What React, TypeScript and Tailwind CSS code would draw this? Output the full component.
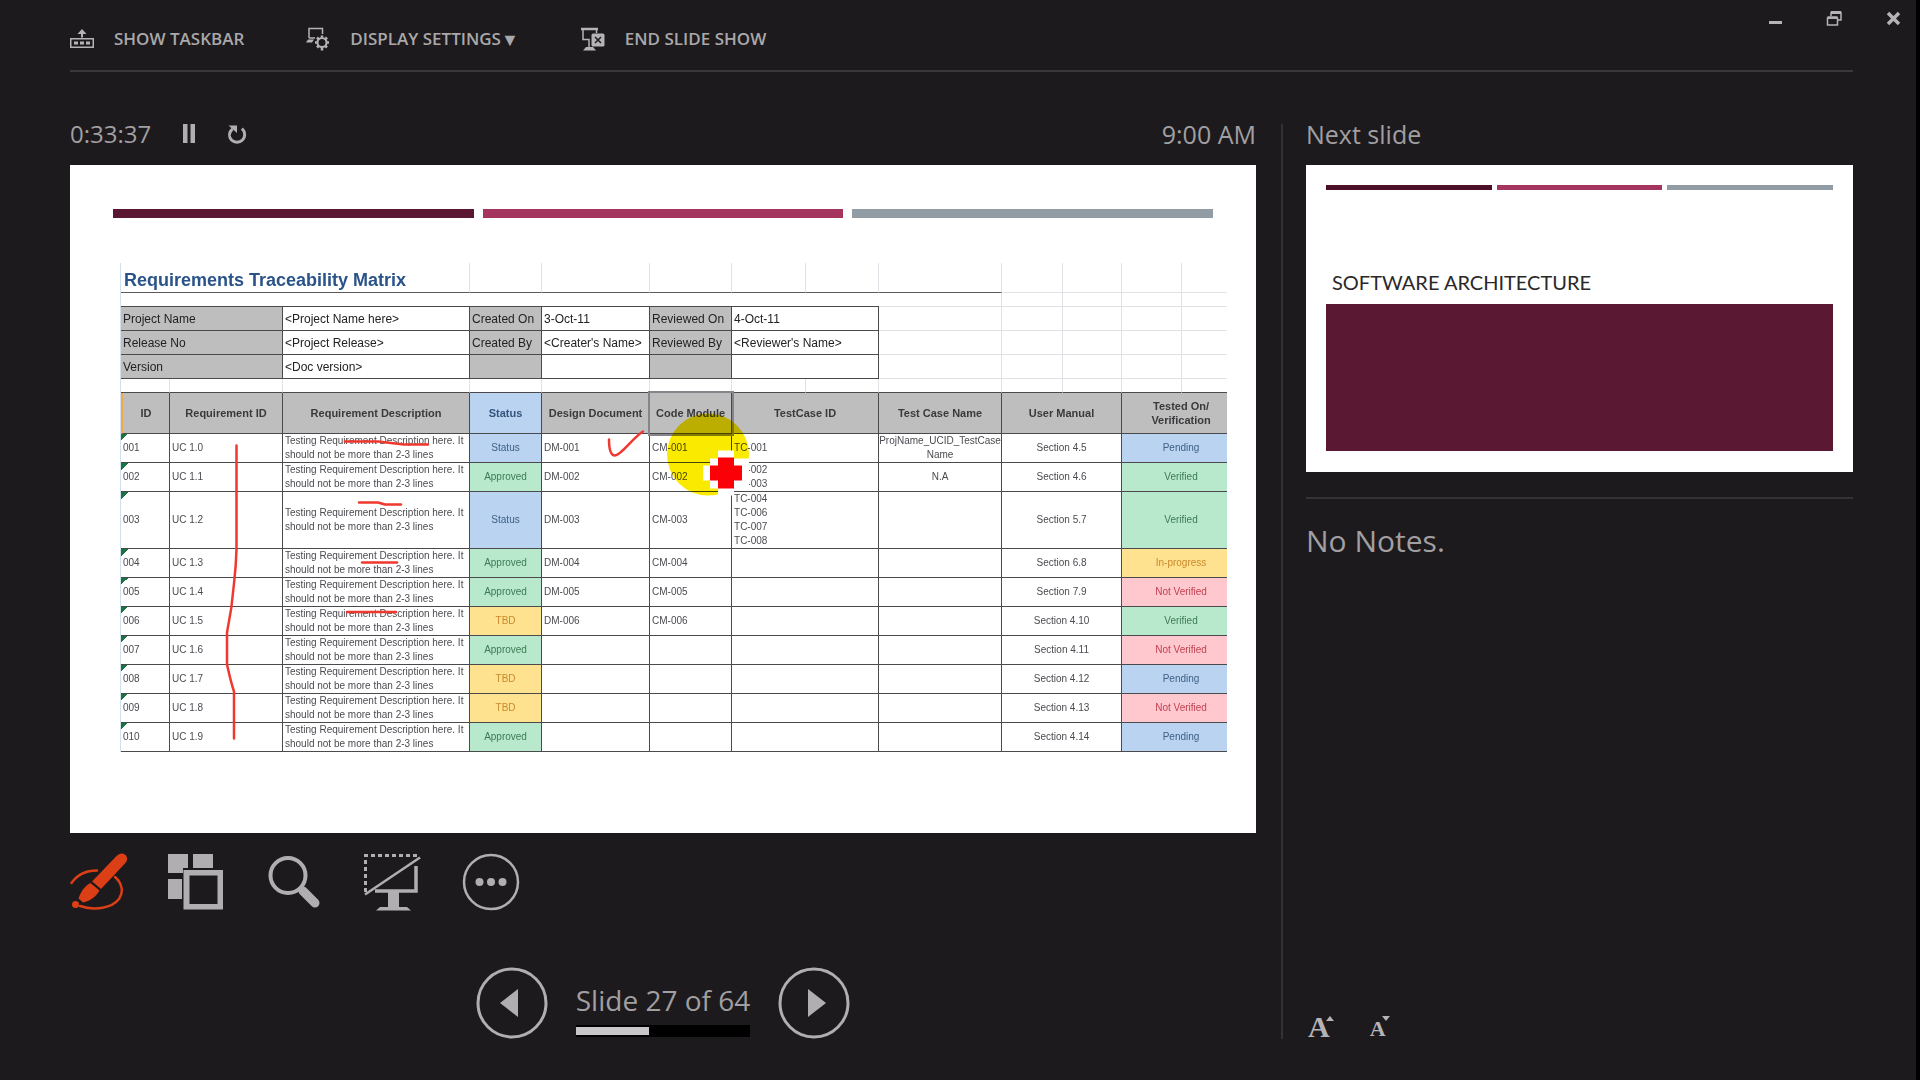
import React from "react";

const TONES: Record<string, string> = {
  Status: "bg-[#b9d3f0] text-[#3f5f86]",
  Pending: "bg-[#b9d3f0] text-[#3f5f86]",
  Approved: "bg-[#b9e9cd] text-[#3d7a55]",
  Verified: "bg-[#b9e9cd] text-[#3d7a55]",
  TBD: "bg-[#ffe28f] text-[#c98a2c]",
  "In-progress": "bg-[#ffe28f] text-[#c98a2c]",
  "Not Verified": "bg-[#ffc7ce] text-[#c24350]",
};

type Row = {
  id: string;
  req: string;
  status: string;
  dm?: string;
  cm?: string;
  tc?: string[];
  name?: string;
  manual: string;
  verification: string;
};

const ROWS: Row[] = [
  { id: "001", req: "UC 1.0", status: "Status", dm: "DM-001", cm: "CM-001", tc: ["TC-001"], name: "ProjName_UCID_TestCase Name", manual: "Section 4.5", verification: "Pending" },
  { id: "002", req: "UC 1.1", status: "Approved", dm: "DM-002", cm: "CM-002", tc: ["TC-002", "TC-003"], name: "N.A", manual: "Section 4.6", verification: "Verified" },
  { id: "003", req: "UC 1.2", status: "Status", dm: "DM-003", cm: "CM-003", tc: ["TC-004", "TC-006", "TC-007", "TC-008"], manual: "Section 5.7", verification: "Verified" },
  { id: "004", req: "UC 1.3", status: "Approved", dm: "DM-004", cm: "CM-004", manual: "Section 6.8", verification: "In-progress" },
  { id: "005", req: "UC 1.4", status: "Approved", dm: "DM-005", cm: "CM-005", manual: "Section 7.9", verification: "Not Verified" },
  { id: "006", req: "UC 1.5", status: "TBD", dm: "DM-006", cm: "CM-006", manual: "Section 4.10", verification: "Verified" },
  { id: "007", req: "UC 1.6", status: "Approved", manual: "Section 4.11", verification: "Not Verified" },
  { id: "008", req: "UC 1.7", status: "TBD", manual: "Section 4.12", verification: "Pending" },
  { id: "009", req: "UC 1.8", status: "TBD", manual: "Section 4.13", verification: "Not Verified" },
  { id: "010", req: "UC 1.9", status: "Approved", manual: "Section 4.14", verification: "Pending" },
];

const INFO = [
  ["Project Name", "<Project Name here>", "Created On", "3-Oct-11", "Reviewed On", "4-Oct-11"],
  ["Release No", "<Project Release>", "Created By", "<Creater's Name>", "Reviewed By", "<Reviewer's Name>"],
  ["Version", "<Doc version>", "", "", "", ""],
];

const DARK = "border-r border-b border-[#4a4a4c]";
const FAINT = "border-r border-b border-[#e4e0e8]";

function FaintTail() {
  return (
    <>
      <td className={FAINT} />
      <td className={FAINT} />
      <td className={FAINT} />
      <td className={FAINT} />
      <td className="border-b border-[#e4e0e8]" />
    </>
  );
}

function Matrix() {
  const data = `${DARK} px-[2px]`;
  const head = `${DARK} bg-[#bfbebf] text-[11px] leading-[14px] font-bold text-[#3a3a3c]`;
  return (
    <table className="w-full table-fixed border-separate border-spacing-0 border-l border-[#cfe0ee] text-[10px] leading-[14px] text-[#4c4a50]">
      <colgroup>
        <col className="w-[49px]" />
        <col className="w-[113px]" />
        <col className="w-[187px]" />
        <col className="w-[72px]" />
        <col className="w-[108px]" />
        <col className="w-[82px]" />
        <col className="w-[74px]" />
        <col className="w-[73px]" />
        <col className="w-[123px]" />
        <col className="w-[61px]" />
        <col className="w-[59px]" />
        <col className="w-[60px]" />
        <col className="w-[45px]" />
      </colgroup>
      <tbody>
        <tr className="h-[30px]">
          <td colSpan={3} className="border-r border-b border-r-[#e4e0e8] border-b-[#5a5a5c] pb-px pl-[3px] align-bottom">
            <h1 className="text-[18px] leading-[22px] font-bold whitespace-nowrap text-[#2a5489]">Requirements Traceability Matrix</h1>
          </td>
          {[0, 1, 2, 3, 4, 5].map((i) => (
            <td key={i} className="border-r border-b border-r-[#e4e0e8] border-b-[#5a5a5c]" />
          ))}
          <td className={FAINT} />
          <td className={FAINT} />
          <td className={FAINT} />
          <td className="border-b border-[#e4e0e8]" />
        </tr>
        <tr className="h-[14px]">
          <td colSpan={8} className="border-b border-[#4a4a4c]" />
          <FaintTail />
        </tr>
        {INFO.map((r) => (
          <tr key={r[0]} className="h-[24px] text-[12px] text-[#222224]">
            <th scope="row" colSpan={2} className={`${data} bg-[#bfbebf] text-left font-normal`}>{r[0]}</th>
            <td className={data}>{r[1]}</td>
            <td className={`${data} bg-[#bfbebf] whitespace-nowrap`}>{r[2]}</td>
            <td className={`${data} whitespace-nowrap`}>{r[3]}</td>
            <td className={`${data} bg-[#bfbebf] whitespace-nowrap`}>{r[4]}</td>
            <td colSpan={2} className={data}>{r[5]}</td>
            <FaintTail />
          </tr>
        ))}
        <tr className="h-[14px]">
          {[0, 1, 2, 3, 4, 5, 6, 7, 8, 9, 10, 11].map((i) => (
            <td key={i} className="border-r border-b border-r-[#e4e0e8] border-b-[#4a4a4c]" />
          ))}
          <td className="border-b border-[#4a4a4c]" />
        </tr>
        <tr className="h-[41px]">
          <th scope="col" className={`${head} border-l-2 border-l-[#f2a94a]`}>ID</th>
          <th scope="col" className={head}>Requirement ID</th>
          <th scope="col" className={head}>Requirement Description</th>
          <th scope="col" className={`${DARK} bg-[#b9d3f0] text-[11px] font-bold text-[#35557f]`}>Status</th>
          <th scope="col" className={`${head} whitespace-nowrap`}>Design Document</th>
          <th scope="col" className={`${head} whitespace-nowrap outline-2 outline-[#85848a]`}>Code Module</th>
          <th scope="col" colSpan={2} className={head}>TestCase ID</th>
          <th scope="col" className={head}>Test Case Name</th>
          <th scope="col" colSpan={2} className={head}>User Manual</th>
          <th scope="col" colSpan={2} className="border-b border-[#4a4a4c] bg-[#bfbebf] pl-[13px] text-[11px] font-bold text-[#3a3a3c]">
            Tested On/
            <br />
            Verification
          </th>
        </tr>
        {ROWS.map((r) => (
          <tr key={r.id} className="h-[29px]">
            <td className={`${data} bg-[linear-gradient(135deg,#1c7340_50%,transparent_50%)] bg-[length:7px_7px] bg-no-repeat`}>{r.id}</td>
            <td className={data}>{r.req}</td>
            <td className={`${data} whitespace-nowrap`}>
              Testing Requirement Description here. It
              <br />
              should not be more than 2-3 lines
            </td>
            <td className={`${DARK} text-center ${TONES[r.status]}`}>{r.status}</td>
            <td className={data}>{r.dm}</td>
            <td className={data}>{r.cm}</td>
            <td colSpan={2} className={data}>
              {r.tc?.map((t) => (
                <div key={t}>{t}</div>
              ))}
            </td>
            <td className={`${DARK} text-center`}>{r.name}</td>
            <td colSpan={2} className={`${DARK} text-center`}>{r.manual}</td>
            <td colSpan={2} className={`border-b border-[#4a4a4c] pl-[13px] text-center ${TONES[r.verification]}`}>{r.verification}</td>
          </tr>
        ))}
      </tbody>
    </table>
  );
}

function Ink() {
  return (
    <>
      <svg viewBox="70 165 1186 667" className="pointer-events-none absolute inset-0 h-full w-full mix-blend-multiply" aria-hidden="true">
        <circle cx="708" cy="454" r="41" fill="#faea00" />
      </svg>
      <svg viewBox="70 165 1186 667" className="pointer-events-none absolute inset-0 h-full w-full" aria-hidden="true">
        <g fill="none" stroke="#f0382f" strokeWidth="2.500" strokeLinecap="round" strokeLinejoin="round">
          <path d="M609 439C609 446 610 455 615 455C621 455 632 438 643 431" />
          <path d="M236.500 445V549Q236 566 234 583Q232 608 227 632V664Q231 682 234 691V738" />
          <path d="M345 441H378L404 444H428" />
          <path d="M359 502H378L385 504H401" />
          <path d="M362 562H397" />
          <path d="M347 611.500H396" />
        </g>
        <path d="M718 450H734V458H749V488H734V495H718V488H710V480H703V465H710V458H718Z" fill="#fff" />
        <path d="M718 457H734V465H742V480H734V488H718V480H710V465H718Z" fill="#fb0007" />
      </svg>
    </>
  );
}

function TaskbarIcon() {
  return (
    <svg width="24" height="24" viewBox="0 0 24 24" fill="#b5b3b5" aria-hidden="true">
      <path d="M12 2l4.500 5H13v3.500h-2V7H7.500z" />
      <path d="M0 11h24v10H0zM1.500 12.500v7h21v-7z" fillRule="evenodd" />
      <path d="M4 14.500h4v3H4zM10 14.500h4v3h-4zM16 14.500h4v3h-4z" />
    </svg>
  );
}

function DisplayIcon() {
  return (
    <svg width="24" height="24" viewBox="0 0 24 24" fill="none" stroke="#b5b3b5" aria-hidden="true">
      <path d="M3 11V1.500h13.500V7M3 11h6" strokeWidth="1.500" />
      <path d="M2 12.500h6l-2 3H0z" fill="#b5b3b5" stroke="none" />
      <circle cx="16" cy="15.500" r="4.500" strokeWidth="2" />
      <path d="M16 8.500v2M16 20.500v3M9 15.500h2.500M20.500 15.500H23M11 10.500l1.800 1.800M19.200 18.700l1.800 1.800M21 10.500l-1.800 1.800M12.800 18.700L11 20.500" strokeWidth="2.500" />
    </svg>
  );
}

function EndShowIcon() {
  return (
    <svg width="24" height="24" viewBox="0 0 24 24" fill="none" stroke="#b5b3b5" aria-hidden="true">
      <path d="M0 2h17" strokeWidth="2.500" />
      <path d="M2 3v9.500h6V20M15.500 3v3" strokeWidth="1.500" />
      <path d="M5 20h7l3 3.500H2z" fill="#b5b3b5" stroke="none" />
      <rect x="10.500" y="6.500" width="13" height="13" rx="1.500" fill="#b5b3b5" stroke="none" />
      <path d="M14 10l6 6M20 10l-6 6" stroke="#1c1a1d" strokeWidth="1.500" />
    </svg>
  );
}

function PenIcon() {
  return (
    <svg width="58" height="58" viewBox="0 0 58 58" fill="none" aria-hidden="true">
      <path d="M1.500 30C7 22 16 17.500 27 17.500M45 24C52 30 54 39 49 46C42 55 25 58 10 53" stroke="#dc3e15" strokeWidth="2.500" strokeLinecap="round" />
      <path d="M22 28.500L46.500 3C49.500 0 53 -0.500 55.500 2C58 4.500 57.500 8 54.500 11L31 36z" fill="#dc3e15" />
      <path d="M20.500 30L29.500 37.500C26 43.500 21 47.500 13 49.500L8.500 45.500C11 38 14.500 33.500 20.500 30z" fill="#dc3e15" />
      <path d="M19 27L33 39" stroke="#1c1a1d" strokeWidth="1.500" />
      <circle cx="5.500" cy="51.500" r="3.500" fill="#dc3e15" />
    </svg>
  );
}

function AllSlidesIcon() {
  return (
    <svg width="58" height="58" viewBox="0 0 58 58" fill="#b0aeb0" aria-hidden="true">
      <path d="M0 1h20v14h-5v5H0zM25 1h20v14H25zM0 26h14v20H0z" />
      <path d="M15.500 17H55v39.500H15.500zM21.500 22.500v28.500H49.500V22.500z" fillRule="evenodd" />
    </svg>
  );
}

function SearchIcon() {
  return (
    <svg width="58" height="58" viewBox="0 0 58 58" fill="none" stroke="#b0aeb0" aria-hidden="true">
      <circle cx="22" cy="22.500" r="17.500" strokeWidth="4" />
      <path d="M34 35l4 4" strokeWidth="6" />
      <path d="M37 38l12 12" strokeWidth="9" strokeLinecap="round" />
    </svg>
  );
}

function BlackScreenIcon() {
  return (
    <svg width="58" height="58" viewBox="0 0 58 58" fill="none" stroke="#b0aeb0" aria-hidden="true">
      <path d="M1.500 39V2.500H55" strokeWidth="3" strokeDasharray="4 3" />
      <path d="M1 41.500L56 4.500" strokeWidth="2.500" />
      <path d="M52 13V38H11" strokeWidth="3.500" />
      <path d="M24 39h11v15h8l4 3.500H12l4-3.500h8z" fill="#b0aeb0" stroke="none" />
    </svg>
  );
}

function MoreIcon() {
  return (
    <svg width="58" height="58" viewBox="0 0 58 58" aria-hidden="true">
      <circle cx="29" cy="29" r="27" fill="none" stroke="#b0aeb0" strokeWidth="2.500" />
      <circle cx="17.500" cy="29" r="4" fill="#b0aeb0" />
      <circle cx="29" cy="29" r="4" fill="#b0aeb0" />
      <circle cx="40.500" cy="29" r="4" fill="#b0aeb0" />
    </svg>
  );
}

function NavButton({ label, points }: { label: string; points: string }) {
  return (
    <button aria-label={label}>
      <svg width="72" height="72" viewBox="0 0 72 72" aria-hidden="true">
        <circle cx="36" cy="36" r="34" fill="none" stroke="#b0aeb0" strokeWidth="3" />
        <polygon points={points} fill="#b0aeb0" />
      </svg>
    </button>
  );
}

function TopBar() {
  const item = "flex items-center gap-5 whitespace-nowrap";
  return (
    <header className="relative mr-[63px] ml-[70px] flex h-[72px] items-center border-b-2 border-[#3a383a] text-[17px] leading-6 font-semibold text-[#aaa8aa]">
      <nav className="flex gap-[62px] pt-2">
        <button className={item}>
          <TaskbarIcon />
          SHOW TASKBAR
        </button>
        <button className={item}>
          <DisplayIcon />
          <span className="flex items-center">
            DISPLAY SETTINGS <span className="text-[18px]">▼</span>
          </span>
        </button>
        <button className={item}>
          <EndShowIcon />
          END SLIDE SHOW
        </button>
      </nav>
      <div className="absolute top-[10px] -right-[49px] flex gap-[42px]">
        <button aria-label="Minimize">
          <svg width="17" height="17" viewBox="0 0 17 17" aria-hidden="true">
            <path d="M2 11h13v3H2z" fill="#b5b3b5" />
          </svg>
        </button>
        <button aria-label="Restore">
          <svg width="17" height="17" viewBox="0 0 17 17" fill="none" stroke="#b5b3b5" strokeWidth="1.500" aria-hidden="true">
            <path d="M5 6V2.500h10V10h-3" />
            <path d="M5 2.500h10" strokeWidth="3" />
            <path d="M1.500 8h10v7h-10z" />
            <path d="M1.500 7.500h10" strokeWidth="2.500" />
          </svg>
        </button>
        <button aria-label="Close">
          <svg width="17" height="17" viewBox="0 0 17 17" stroke="#b5b3b5" strokeWidth="3.500" aria-hidden="true">
            <path d="M3 3l11 11M14 3L3 14" />
          </svg>
        </button>
      </div>
    </header>
  );
}

export default function App() {
  return (
    <div className="flex min-h-screen flex-col border-r-4 border-black bg-[#1c1a1d] font-['Open_Sans','Noto_Sans',sans-serif] text-[#a19fa1]">
      <TopBar />
      <main className="mr-[63px] ml-[70px] flex flex-1 pb-[42px]">
        <section className="min-w-0 flex-[1186]">
          <div className="flex h-[93px] items-center pt-[30px] text-[25px] leading-8">
            <time className="mr-[31px] text-[24px]">0:33:37</time>
            <button aria-label="Pause timer" className="mr-[31px]">
              <svg width="14" height="20" viewBox="0 0 14 20" fill="#b0aeb0" aria-hidden="true">
                <path d="M1 0h4.500v19H1zM8.500 0H13v19H8.500z" />
              </svg>
            </button>
            <button aria-label="Restart timer">
              <svg width="20" height="20" viewBox="0 0 20 20" fill="none" stroke="#b0aeb0" aria-hidden="true">
                <path d="M15 4.500C18.500 8 18.500 13 15.500 16C12.500 19 7.500 19 4.500 16C1.500 12.500 2 8 5.500 5" strokeWidth="3" />
                <path d="M1.500 1.500H10V9z" fill="#b0aeb0" stroke="none" />
              </svg>
            </button>
            <time className="ml-auto">9:00 AM</time>
          </div>
          <div className="relative isolate bg-white pt-[44px] pb-[81px] font-['Liberation_Sans',Arial,sans-serif]">
            <div className="mx-[43px] mb-[45px] grid grid-cols-3 gap-[9px]">
              <div className="h-[9px] bg-[#5a1633]" />
              <div className="h-[9px] bg-[#a3355f]" />
              <div className="h-[9px] bg-[#919ca4]" />
            </div>
            <div className="mr-[29px] ml-[50px]">
              <Matrix />
            </div>
            <Ink />
          </div>
          <div className="flex gap-[40px] pt-[20px]">
            <button aria-label="Pen and laser pointer tools"><PenIcon /></button>
            <button aria-label="See all slides"><AllSlidesIcon /></button>
            <button aria-label="Zoom into the slide"><SearchIcon /></button>
            <button aria-label="Black or unblack slide show"><BlackScreenIcon /></button>
            <button aria-label="More slide show options"><MoreIcon /></button>
          </div>
          <div className="flex items-start justify-center gap-[28px] pt-[56px]">
            <NavButton label="Previous slide" points="24,36 42,22 42,50" />
            <div className="pt-[13px]">
              <p className="text-[28px] leading-[40px] whitespace-nowrap">Slide 27 of 64</p>
              <div className="mt-[5px] h-[12px] bg-black py-[2px]">
                <div className="h-[8px] w-[42%] bg-[#c9c7c9]" />
              </div>
            </div>
            <NavButton label="Next slide" points="30,22 48,36 30,50" />
          </div>
        </section>
        <div className="mt-[52px] mr-[23px] ml-[25px] w-[2px] bg-[#343234]" />
        <aside className="flex min-w-0 flex-[547] flex-col">
          <h2 className="flex h-[93px] items-center pt-[30px] text-[25px] leading-8">Next slide</h2>
          <div className="bg-white px-5 pt-5 pb-[21px]">
            <div className="grid grid-cols-3 gap-[5px]">
              <div className="h-[5px] bg-[#4d1029]" />
              <div className="h-[5px] bg-[#a3355f]" />
              <div className="h-[5px] bg-[#919ca4]" />
            </div>
            <p className="mt-[79px] pl-[6px] font-['Lato',sans-serif] text-[20px] leading-[26px] text-[#2a282a]">SOFTWARE ARCHITECTURE</p>
            <div className="mt-[9px] h-[147px] bg-[#5a1833]" />
          </div>
          <p className="mt-[25px] border-t-2 border-[#343234] pt-[21px] text-[30px] leading-[42px]">No Notes.</p>
          <div className="mt-auto flex gap-[36px] pl-[2px] font-['Liberation_Serif',serif] font-bold text-[#b5b3b5]">
            <button aria-label="Make the text larger" className="flex items-end">
              <span className="text-[30px] leading-6">A</span>
              <svg width="8" height="24" viewBox="0 0 8 24" className="-ml-1" aria-hidden="true">
                <path d="M0 6L4 1L8 6z" fill="#b5b3b5" />
              </svg>
            </button>
            <button aria-label="Make the text smaller" className="flex items-end">
              <span className="text-[22px] leading-5">A</span>
              <svg width="8" height="24" viewBox="0 0 8 24" className="-ml-1" aria-hidden="true">
                <path d="M0 1h8L4 6z" fill="#b5b3b5" />
              </svg>
            </button>
          </div>
        </aside>
      </main>
    </div>
  );
}
